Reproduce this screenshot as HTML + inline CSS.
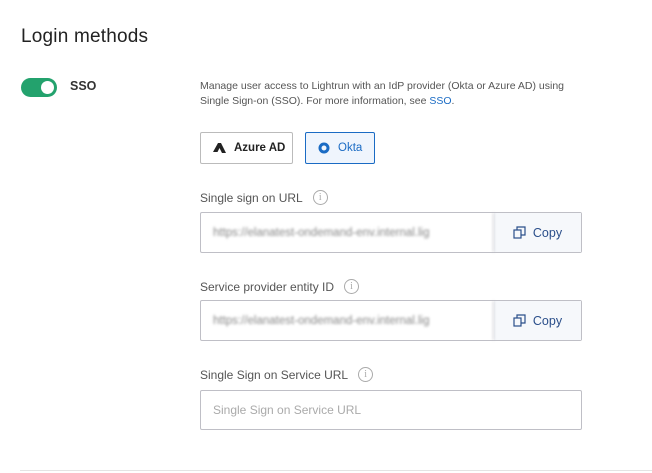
<!DOCTYPE html>
<html><head><meta charset="utf-8"><style>
*{box-sizing:border-box;margin:0;padding:0}
body{width:652px;height:473px;background:#fff;font-family:"Liberation Sans",sans-serif;position:relative;overflow:hidden;color:#333}
.a{position:absolute}
.h{left:21px;top:26px;font-size:19px;color:#222;letter-spacing:0.2px}
.tog{left:21px;top:78px;width:36px;height:19px;border-radius:10px;background:#23a26d}
.tog:after{content:"";position:absolute;right:3px;top:3px;width:13px;height:13px;border-radius:50%;background:#fff}
.sso{left:70px;top:79px;font-size:12.5px;color:#333;font-weight:600}
.desc{left:200px;top:79px;font-size:10.5px;line-height:15px;color:#555;width:385px;white-space:nowrap}
.desc span{color:#1a6bc4}
.btn{top:132px;height:32px;border:1px solid #bbb;border-radius:2px;font-size:11.5px;display:flex;align-items:center;gap:8px;padding-left:12px;color:#222}
.okta{border-color:#1a6bc4;background:#eff5fd;color:#1a6bc4}
.lbl{left:200px;font-size:12px;color:#555;display:flex;align-items:center;gap:10px}
.i{width:15px;height:15px;border:1.3px solid #aaa;border-radius:50%;font-size:10px;color:#aaa;display:flex;align-items:center;justify-content:center;font-family:"Liberation Serif",serif}
.inp{left:200px;width:382px;height:41px;border:1px solid #bfbfc6;border-radius:2px;display:flex}
.inp .t{flex:0 0 293px;padding-left:12px;display:flex;align-items:center;font-size:11.5px;color:#888;filter:blur(1.2px);border-right:1px solid #bfbfc6}
.inp .c{flex:1;background:#f6f8fb;display:flex;align-items:center;justify-content:center;gap:7px;color:#2a4e8a;font-size:12.5px}
.ph{padding-left:12px;display:flex;align-items:center;font-size:12px;color:#aaa}
.line{left:20px;top:470px;width:632px;height:1px;background:#e4e4e4}
</style></head><body>
<div class="a h">Login methods</div>
<div class="a tog"></div>
<div class="a sso">SSO</div>
<div class="a desc">Manage user access to Lightrun with an IdP provider (Okta or Azure AD) using<br>Single Sign-on (SSO). For more information, see <span>SSO</span>.</div>
<div class="a btn" style="left:200px;width:93px"><svg width="13" height="10" viewBox="0 0 13 10"><path d="M5 0H8L13 10H9L6.5 5L4.5 9H0Z" fill="#222"/></svg><b style="font-weight:600">Azure AD</b></div>
<div class="a btn okta" style="left:305px;width:70px"><svg width="12" height="12"><circle cx="6" cy="6" r="4" fill="none" stroke="#1a6bc4" stroke-width="3"/></svg>Okta</div>

<div class="a lbl" style="top:190px">Single sign on URL <span class="i">i</span></div>
<div class="a inp" style="top:212px"><div class="t">https://elanatest-ondemand-env.internal.lig</div><div class="c"><svg width="13" height="13" viewBox="0 0 13 13" fill="none" stroke="#2a4e8a" stroke-width="1.2"><rect x="1" y="4" width="7" height="8"/><path d="M4 4V1H12V9H8"/></svg>Copy</div></div>

<div class="a lbl" style="top:279px">Service provider entity ID <span class="i">i</span></div>
<div class="a inp" style="top:300px"><div class="t">https://elanatest-ondemand-env.internal.lig</div><div class="c"><svg width="13" height="13" viewBox="0 0 13 13" fill="none" stroke="#2a4e8a" stroke-width="1.2"><rect x="1" y="4" width="7" height="8"/><path d="M4 4V1H12V9H8"/></svg>Copy</div></div>

<div class="a lbl" style="top:367px">Single Sign on Service URL <span class="i">i</span></div>
<div class="a inp ph" style="top:390px;height:40px">Single Sign on Service URL</div>
<div class="a line"></div>
</body></html>
